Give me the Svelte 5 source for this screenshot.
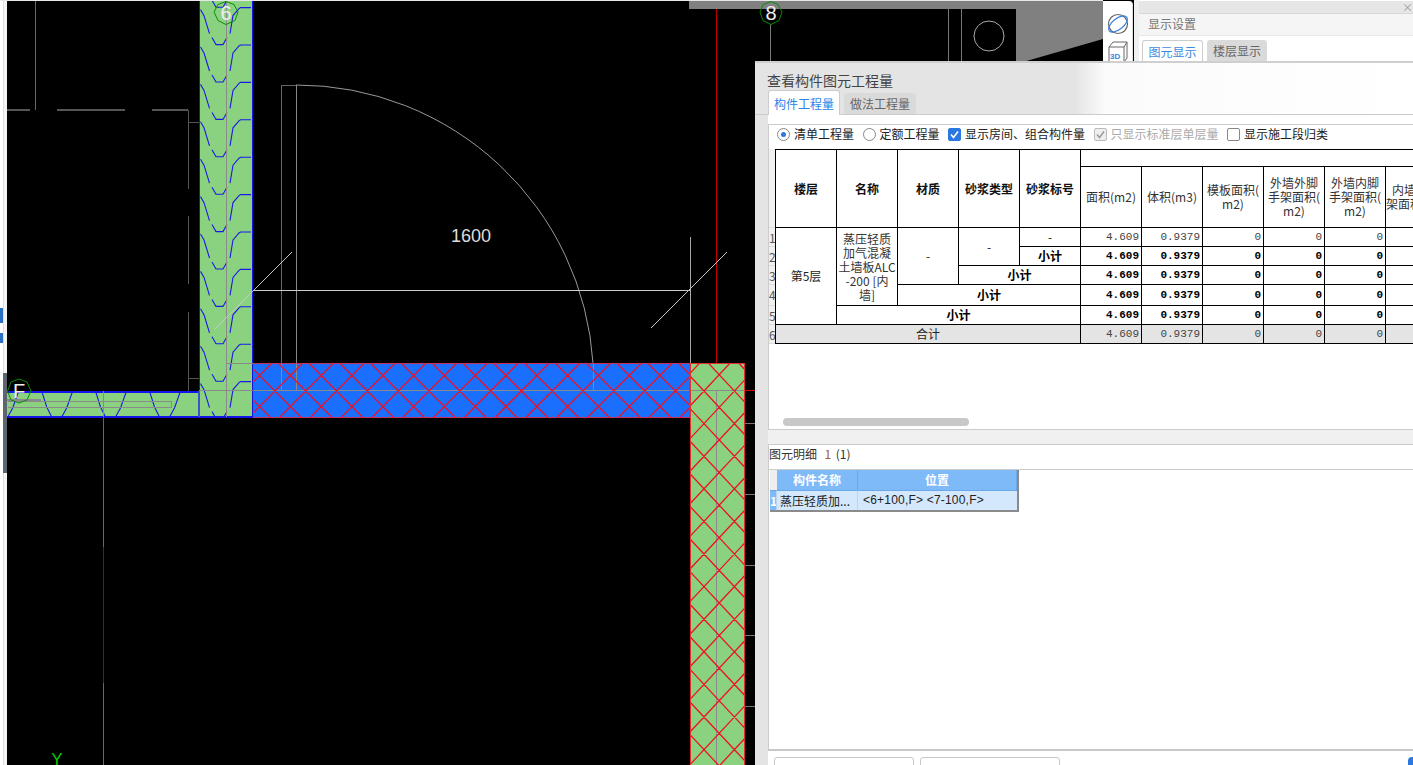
<script>
  const dashes = Array.from({ length: 12 }, (_, i) => 7.6 + (i - 1) * 37.4);
  const hUnits = [-12.3, 41.7, 95.5, 149.5];
  const ticks = [423, 494, 565, 635, 706];

  // cross hatch: lines through a lattice point, dx/dy is one diamond
  function crossHatch(x, y, dx, dy, n) {
    let d = '';
    const reach = 20;
    for (let k = -n; k <= n; k++) {
      const cx = x + k * dx;
      d += `M${cx - reach * dx} ${y - reach * dy}L${cx + reach * dx} ${y + reach * dy}`;
      d += `M${cx + reach * dx} ${y - reach * dy}L${cx - reach * dx} ${y + reach * dy}`;
    }
    return d;
  }
  const blueHatch = crossHatch(275, 391, 30.8, 31, 35);
  const greenHatch = crossHatch(704, 391, 30.4, 32.6, 35);

  const valueHeads = [
    '面积(m2)',
    '体积(m3)',
    '模板面积(\nm2)',
    '外墙外脚\n手架面积(\nm2)',
    '外墙内脚\n手架面积(\nm2)',
    '内墙脚手\n架面积(m2)',
  ];
  const values = ['4.609', '0.9379', '0', '0', '0', '0'];
</script>

<div class="screen">
  <svg class="cad" width="1413" height="765" viewBox="0 0 1413 765">
    <defs>
      <clipPath id="wallV"><rect x="199" y="1" width="54" height="416" /></clipPath>
      <clipPath id="wallH"><rect x="7" y="391" width="192" height="26" /></clipPath>
      <clipPath id="selBlue"><rect x="253" y="363" width="437" height="54" /></clipPath>
      <clipPath id="selGreen"><rect x="690" y="363" width="55" height="402" /></clipPath>
    </defs>

    <rect width="1413" height="765" fill="#000" />

    <!-- left edge of the window -->
    <rect width="7" height="765" fill="#fff" />
    <rect x="3" width="1" height="765" fill="#dcdcdc" />
    <rect x="4" width="3" height="765" fill="#f4f4f4" />
    <rect y="308" width="3" height="15" fill="#2a6fc0" />
    <rect y="333" width="3" height="10" fill="#2a6fc0" />
    <rect x="3" y="373" width="4" height="100" fill="#5c6670" />

    <!-- grey background of the 3d view -->
    <rect y="0" width="1103" height="1" fill="#e8e8e8" />
    <polygon points="689,1 1103,1 1103,39 1016,64 1016,9 689,9" fill="#808080" />

    <!-- thin lines on black -->
    <g shape-rendering="crispEdges" fill="none">
      <path d="M35.5 1V110" stroke="#666" />
      <path d="M7 110H30M57 110H125M152 110H188" stroke="#555" stroke-width="1.5" />
      <path d="M188.5 110V189M188.5 216V284M188.5 312V391" stroke="#555" stroke-width="1.5" />
      <path d="M188 122.5H199M188 378H199" stroke="#555" />
      <path d="M103.5 417V547M103.5 683V765" stroke="#666" />
      <path d="M103.5 547V683" stroke="#a00000" />
      <path d="M281 85V391M281 85H296" stroke="#666" />
      <path d="M770.5 24V61" stroke="#777" />
      <path d="M948 9V61M961.5 9V61" stroke="#777" />
      <path d="M745 390.5H755" stroke="#e00000" />
      {#each ticks as y}
        <path d="M745 {y}.5H755" stroke="#777" />
      {/each}
    </g>
    <path d="M296.5 85V391" stroke="#888" shape-rendering="crispEdges" />
    <circle cx="989" cy="36" r="15" fill="none" stroke="#aaa" />
    <path d="M296 85A297 297 0 0 1 593 363" fill="none" stroke="#999" />

    <!-- green walls -->
    <rect x="199" y="1" width="54" height="416" fill="#8ad27f" />
    <rect x="7" y="391" width="192" height="26" fill="#8ad27f" />
    <g clip-path="url(#wallV)" fill="none" stroke="#1a1ae6" stroke-width="1.1">
      {#each dashes as y}
        <path d="M200.5 {y + 2}L204 {y + 8}L209.5 {y + 26}" />
        <path d="M212 {y + 30}L216 {y + 37}H223L227 {y + 30}" />
        <path d="M230 {y + 26}L233 {y + 8}L239 {y + 1}L240.5 {y}H251" />
      {/each}
    </g>
    <g clip-path="url(#wallH)" fill="none" stroke="#1a1ae6" stroke-width="1.1">
      {#each hUnits as x}
        <path d="M{x} 391L{x + 5} 407L{x + 10} 417" />
        <path d="M{x + 31} 391L{x + 25} 408L{x + 20} 417" />
      {/each}
    </g>
    <g shape-rendering="crispEdges" fill="none">
      <path d="M199.5 1V417M252.5 1V417" stroke="#1414e8" />
      <path d="M7 391.5H199" stroke="#1414f0" stroke-width="2" />
      <path d="M7 417H253" stroke="#1414e8" stroke-width="1.5" />
      <path d="M199 391V417" stroke="#3a55c8" stroke-width="2.5" />
      <path d="M226.5 1V417" stroke="#8a8a8a" />
      <path d="M226 363.5H253" stroke="#8a8a8a" />
      <path d="M199 390.5H253" stroke="#8a8a8a" />
      <path d="M7 399.5H41" stroke="#8a8a8a" stroke-width="2" />
      <path d="M7.5 401.5H171.5V407.5H7.5" stroke="#8a8a8a" />
      <path d="M103.5 391V417" stroke="#8a8a8a" />
    </g>

    <!-- selected walls -->
    <rect x="253" y="363" width="437" height="54" fill="#1a6fff" />
    <rect x="690" y="363" width="55" height="402" fill="#8ad27f" />
    <g shape-rendering="crispEdges" fill="none">
      <path d="M253 390.5H745" stroke="#8a8a8a" />
      <path d="M281 363V391M296.5 363V391M593.5 363V390" stroke="#8a8a8a" />
      <path d="M716.5 391V765" stroke="#8a8a8a" />
    </g>
    <g clip-path="url(#selBlue)">
      <path d={blueHatch} stroke="#f01020" stroke-width="1.3" fill="none" />
    </g>
    <g clip-path="url(#selGreen)">
      <path d={greenHatch} stroke="#f01020" stroke-width="1.3" fill="none" />
    </g>
    <g shape-rendering="crispEdges" fill="none">
      <path d="M253.5 417.5V363.5H689.5V417.5H253.5" stroke="#c8325a" />
      <path d="M690 363.5H744.5V765M690 363V765" stroke="#e03030" />
      <path d="M716.5 9V363" stroke="#c00000" />
    </g>

    <!-- dimension -->
    <path d="M253 290.5H690" stroke="#ccc" shape-rendering="crispEdges" />
    <path d="M690.5 237V363" stroke="#aaa" shape-rendering="crispEdges" />
    <path d="M215 329L292 252M651 328L727 252" stroke="#c8c8c8" fill="none" />
    <text class="dim" x="451" y="242">1600</text>

    <!-- axis bubbles -->
    <polygon points="226,1.5 234,4.5 238,12 235,20.5 226,24.5 218,20.5 214,12 218,4.5" fill="none" stroke="#0a8a0a" />
    <text class="axis" x="226" y="20">6</text>
    <polygon points="771,1.5 778,4.5 782,12 779,20.5 771,24.5 763,20.5 760,12 763,4.5" fill="none" stroke="#0a8a0a" />
    <text class="axis" x="771" y="20">8</text>
    <polygon points="19,379 27,382 31,391 27,400 19,403 11,400 7.5,391 11,382" fill="none" stroke="#0a8a0a" />
    <text class="axis" x="19" y="398">F</text>
    <text class="ucs" x="57" y="765">Y</text>
  </svg>

  <aside class="tools">
    <svg width="24" height="24" viewBox="0 0 24 24" fill="none">
      <circle cx="12" cy="12" r="9.5" stroke="#666" stroke-width="1.2" />
      <ellipse cx="12" cy="12" rx="11" ry="5.5" stroke="#3a80e0" stroke-width="1.2" transform="rotate(-38 12 12)" />
    </svg>
    <svg width="22" height="22" viewBox="0 0 22 22" fill="none">
      <path d="M2 6L6 1H20V17L17 21H2ZM2 6H17V21M17 6L20 1" stroke="#666" />
      <text class="tool-3d" x="3" y="18">3D</text>
    </svg>
  </aside>

  <aside class="settings">
    <div class="settings-bar">×</div>
    <div class="settings-title">显示设置</div>
    <div class="settings-tabs">
      <span class="settings-tab on">图元显示</span>
      <span class="settings-tab">楼层显示</span>
    </div>
  </aside>

  <section class="dialog">
    <div class="dialog-title">查看构件图元工程量</div>
    <div class="tabs">
      <span class="tab on">构件工程量</span>
      <span class="tab">做法工程量</span>
    </div>

    <div class="body">
      <div class="options">
        <span class="opt"><i class="radio on"></i>清单工程量</span>
        <span class="opt"><i class="radio"></i>定额工程量</span>
        <span class="opt">
          <i class="check on">
            <svg width="13" height="13" viewBox="0 0 13 13"><path d="M3 6.5L5.5 9.5L10 3.5" fill="none" stroke="#fff" stroke-width="1.6" /></svg>
          </i>显示房间、组合构件量
        </span>
        <span class="opt off">
          <i class="check dis">
            <svg width="13" height="13" viewBox="0 0 13 13"><path d="M3 6.5L5.5 9.5L10 3.5" fill="none" stroke="#999" stroke-width="1.4" /></svg>
          </i>只显示标准层单层量
        </span>
        <span class="opt"><i class="check"></i>显示施工段归类</span>
      </div>

      <div class="grid-wrap">
        <div class="gutter">
          <span class="g-head"></span>
          {#each [19, 19, 19, 21, 19, 19] as h, i}
            <span class="g-num" style="height: {h}px">{i + 1}</span>
          {/each}
        </div>
        <table class="qty">
          <colgroup>
            {#each Array(11) as _}<col class="c" />{/each}
          </colgroup>
          <thead>
            <tr class="h1">
              <th rowspan="2">楼层</th>
              <th rowspan="2">名称</th>
              <th rowspan="2">材质</th>
              <th rowspan="2">砂浆类型</th>
              <th rowspan="2">砂浆标号</th>
              <th colspan="6"></th>
            </tr>
            <tr class="h2">
              {#each valueHeads as head}
                <th class="vh">{head}</th>
              {/each}
            </tr>
          </thead>
          <tbody>
            <tr class="r19">
              <td rowspan="5" class="ctr">第5层</td>
              <td rowspan="4" class="ctr name">蒸压轻质<br />加气混凝<br />土墙板ALC<br />-200 [内<br />墙]</td>
              <td rowspan="3" class="ctr">-</td>
              <td rowspan="2" class="ctr">-</td>
              <td class="ctr">-</td>
              {#each values as v}<td class="num">{v}</td>{/each}
            </tr>
            <tr class="r19 sub">
              <td class="ctr">小计</td>
              {#each values as v}<td class="num">{v}</td>{/each}
            </tr>
            <tr class="r19 sub">
              <td colspan="2" class="ctr">小计</td>
              {#each values as v}<td class="num">{v}</td>{/each}
            </tr>
            <tr class="r21 sub">
              <td colspan="3" class="ctr">小计</td>
              {#each values as v}<td class="num">{v}</td>{/each}
            </tr>
            <tr class="r19 sub">
              <td colspan="4" class="ctr">小计</td>
              {#each values as v}<td class="num">{v}</td>{/each}
            </tr>
            <tr class="r19 total">
              <td colspan="5" class="ctr">合计</td>
              {#each values as v}<td class="num">{v}</td>{/each}
            </tr>
          </tbody>
        </table>
        <div class="scroll-thumb"></div>
      </div>

      <div class="splitter"></div>

      <div class="detail">
        <div class="detail-title">图元明细&nbsp;&nbsp;<span class="count">1</span> (1)</div>
        <table class="mini">
          <thead>
            <tr>
              <th class="corner"></th>
              <th class="m1">构件名称</th>
              <th class="m2">位置</th>
            </tr>
          </thead>
          <tbody>
            <tr>
              <td class="idx">1</td>
              <td>蒸压轻质加...</td>
              <td class="pos">&lt;6+100,F&gt; &lt;7-100,F&gt;</td>
            </tr>
          </tbody>
        </table>
      </div>
    </div>

    <div class="footer">
      <span class="btn"></span>
      <span class="btn"></span>
      <span class="primary"></span>
    </div>
  </section>
</div>

<style>
  :global(body) {
    margin: 0;
    overflow: hidden;
  }

  .screen {
    position: relative;
    width: 1413px;
    height: 765px;
    overflow: hidden;
    background: #000;
    font-family: "Noto Sans CJK SC", "Liberation Sans", sans-serif;
    font-size: 12px;
    color: #222;
  }

  .cad {
    position: absolute;
    left: 0;
    top: 0;
    display: block;
  }

  .dim {
    font-family: "Liberation Sans", sans-serif;
    font-size: 18px;
    fill: #ddd;
  }

  .axis {
    font-family: "Liberation Sans", sans-serif;
    font-size: 20px;
    fill: #eee;
    text-anchor: middle;
  }

  .ucs {
    font-family: "Liberation Sans", sans-serif;
    font-size: 17px;
    fill: #0c0;
    text-anchor: middle;
  }

  .tools {
    position: absolute;
    left: 1103px;
    top: 1px;
    width: 30px;
    height: 60px;
    display: flex;
    flex-direction: column;
    align-items: center;
    gap: 5px;
    padding-top: 11px;
    box-sizing: border-box;
    background: #fff;
    border-radius: 0 4px 0 0;
    border-right: 1px solid #ddd;
    overflow: hidden;
  }

  .tools svg {
    flex: none;
  }

  .tool-3d {
    font-family: "Liberation Sans", sans-serif;
    font-size: 8px;
    font-weight: 700;
    fill: #3a80e0;
  }

  .settings {
    position: absolute;
    left: 1134px;
    top: 0;
    width: 279px;
    height: 62px;
    background: #fff;
    border-left: 5px solid #f0f0f0;
    box-sizing: border-box;
  }

  .settings-bar {
    height: 12px;
    margin-top: 1px;
    background: #e6e6e6;
    border-bottom: 1px solid #d8d8d8;
    color: #999;
    font-size: 11px;
    line-height: 12px;
    text-align: right;
  }

  .settings-title {
    height: 21px;
    padding-left: 9px;
    background: #f5f5f5;
    color: #777;
    line-height: 19px;
    border-bottom: 1px solid #e8e8e8;
  }

  .settings-tabs {
    display: flex;
    gap: 4px;
    padding: 4px 0 0 3px;
  }

  .settings-tab {
    width: 60px;
    height: 23px;
    line-height: 22px;
    text-align: center;
    background: #dadada;
    border-radius: 3px 3px 0 0;
    color: #666;
  }

  .settings-tab.on {
    background: #fff;
    color: #3b8be0;
    box-sizing: border-box;
    width: 61px;
    border: 1px solid #ccc;
    border-bottom: 0;
  }

  .dialog {
    position: absolute;
    left: 755px;
    top: 61px;
    width: 658px;
    height: 704px;
    display: flex;
    flex-direction: column;
    box-sizing: border-box;
    border-top: 2px solid #cfcfcf;
    background: #e4e4e4;
    overflow: hidden;
  }

  .dialog-title {
    flex: none;
    height: 28px;
    padding: 9px 0 0 12px;
    box-sizing: border-box;
    font-size: 14px;
    line-height: 16px;
    color: #444;
    background: linear-gradient(90deg, #e4e4e4 0, #e4e4e4 320px, #fbfbfb 350px, #fff 100%);
  }

  .tabs {
    flex: none;
    height: 24px;
    display: flex;
    align-items: flex-end;
    gap: 4px;
    padding-left: 13px;
    box-sizing: border-box;
    border-bottom: 1px solid #ccc;
    background: linear-gradient(90deg, #e4e4e4 0, #e4e4e4 320px, #fbfbfb 350px, #fff 100%);
  }

  .tab {
    width: 72px;
    height: 21px;
    line-height: 21px;
    text-align: center;
    background: #dadada;
    color: #666;
    border-radius: 3px 3px 0 0;
  }

  .tab.on {
    height: 25px;
    line-height: 25px;
    background: #fff;
    color: #2a84e8;
    border: 1px solid #ccc;
    border-bottom: 0;
    box-sizing: border-box;
    margin-bottom: -1px;
  }

  .body {
    flex: 1;
    margin-left: 13px;
    padding-top: 9px;
    display: flex;
    flex-direction: column;
    background: #fff;
    border-bottom: 2px solid #c8c8c8;
    min-height: 0;
  }

  .options {
    flex: none;
    height: 24px;
    display: flex;
    align-items: flex-start;
    gap: 8.5px;
    padding: 0 0 0 8px;
    box-sizing: border-box;
    border-top: 1px solid #ccc;
    border-left: 1px solid #ccc;
    line-height: 18px;
  }

  .opt {
    display: flex;
    align-items: center;
    gap: 4px;
    height: 18px;
    color: #222;
    white-space: nowrap;
  }

  .opt.off {
    color: #aaa;
  }

  .radio,
  .check {
    display: block;
    flex: none;
    width: 13px;
    height: 13px;
    box-sizing: border-box;
    border: 1px solid #888;
    background: #fff;
  }

  .radio {
    position: relative;
    border-radius: 50%;
  }

  .radio.on::after {
    content: "";
    position: absolute;
    left: 3px;
    top: 3px;
    width: 5px;
    height: 5px;
    border-radius: 50%;
    background: #2a78e0;
  }

  .check {
    border-radius: 2px;
  }

  .check svg {
    display: block;
    margin: -1px;
  }

  .check.on {
    background: #2a78e0;
    border-color: #2a78e0;
  }

  .check.dis {
    background: #eee;
    border-color: #bbb;
  }

  .grid-wrap {
    position: relative;
    flex: none;
    height: 281px;
    display: flex;
    align-items: flex-start;
    border-left: 1px solid #ccc;
    overflow: hidden;
  }

  .gutter {
    flex: none;
    width: 6px;
    margin-top: 1px;
    display: flex;
    flex-direction: column;
    background: #f0f0f0;
    overflow: hidden;
  }

  .g-head {
    height: 79px;
    border-bottom: 1px solid #ddd;
    box-sizing: border-box;
  }

  .g-num {
    display: block;
    font-size: 12px;
    line-height: 20px;
    color: #555;
    box-sizing: border-box;
    border-bottom: 1px solid #ddd;
  }

  .g-num:first-of-type {
    color: #a0601a;
  }

  .qty {
    flex: none;
    border-collapse: collapse;
    table-layout: fixed;
    width: 671px;
    margin: 1px 0 0;
    background: #fff;
  }

  .qty .c {
    width: 61px;
  }

  .qty th,
  .qty td {
    border: 1px solid #000;
    padding: 0;
    font-size: 12px;
    line-height: 14px;
    overflow: hidden;
  }

  .qty th {
    font-weight: 700;
    color: #111;
    text-align: center;
    white-space: nowrap;
  }

  .qty .vh {
    font-weight: 400;
    white-space: pre;
    color: #333;
    vertical-align: middle;
  }

  .h1 {
    height: 17px;
  }

  .h2 {
    height: 61px;
  }

  .r19 {
    height: 19px;
  }

  .r21 {
    height: 21px;
  }

  .ctr {
    text-align: center;
  }

  .qty td.name {
    color: #333;
  }

  .qty td.num {
    font-family: "Liberation Mono", "DejaVu Sans Mono", monospace;
    font-size: 11px;
    text-align: right;
    padding-right: 2px;
    color: #444;
  }

  .sub td {
    font-weight: 700;
    color: #000;
  }

  .qty .sub td.num {
    color: #000;
  }

  .total td {
    background: #e4e4e4;
  }

  .scroll-thumb {
    position: absolute;
    left: 14px;
    top: 270px;
    width: 186px;
    height: 8px;
    border-radius: 4px;
    background: #c8c8c8;
  }

  .splitter {
    flex: none;
    height: 15px;
    box-sizing: border-box;
    background: #f0f0f0;
    border-top: 1px solid #ccc;
  }

  .detail {
    flex: 1;
    min-height: 0;
    background: #fff;
    border-top: 1px solid #ccc;
    border-left: 1px solid #ccc;
  }

  .detail-title {
    height: 25px;
    padding-left: 0;
    box-sizing: border-box;
    line-height: 17px;
    color: #333;
    border-bottom: 1px solid #ccc;
  }

  .count {
    margin-left: 2px;
    margin-right: 2px;
    color: #a0601a;
  }

  .mini {
    border-collapse: separate;
    border-spacing: 0;
    table-layout: fixed;
    width: 249px;
    margin-left: 1px;
    border-right: 2px solid #8a8a8a;
    border-bottom: 2px solid #8a8a8a;
  }

  .mini th {
    height: 20px;
    padding: 0;
    background: #7fbaf8;
    color: #fff;
    font-weight: 700;
    font-size: 12px;
    line-height: 20px;
    border-right: 1px solid #6aa8ee;
  }

  .mini .corner {
    width: 7px;
    background: #eee;
    border-right: 0;
  }

  .mini .m1 {
    width: 80px;
  }

  .mini td {
    height: 19px;
    padding: 0 0 0 3px;
    background: #d3e8fd;
    font-size: 12px;
    line-height: 19px;
    color: #222;
    white-space: nowrap;
    overflow: hidden;
    border-right: 1px solid #b8d4f0;
    border-top: 1px solid #6aa8ee;
  }

  .mini td.idx {
    padding: 0;
    background: #7fbaf8;
    color: #fff;
    font-weight: 700;
    text-align: center;
  }

  .mini td.pos {
    padding-left: 5px;
    font-family: "Liberation Sans", sans-serif;
    letter-spacing: 0.2px;
    border-right: 0;
  }

  .footer {
    flex: none;
    position: relative;
    height: 14px;
    display: flex;
    gap: 6px;
    margin-left: 13px;
    padding: 6px 0 0 6px;
    box-sizing: border-box;
    background: #fff;
    overflow: hidden;
  }

  .btn {
    flex: none;
    width: 140px;
    height: 20px;
    box-sizing: border-box;
    border: 1px solid #c8c8c8;
    border-radius: 3px;
    background: #fff;
  }

  .primary {
    position: absolute;
    right: 0;
    top: 6px;
    width: 5px;
    height: 20px;
    border-radius: 4px 0 0 0;
    background: #2a78e0;
  }
</style>
